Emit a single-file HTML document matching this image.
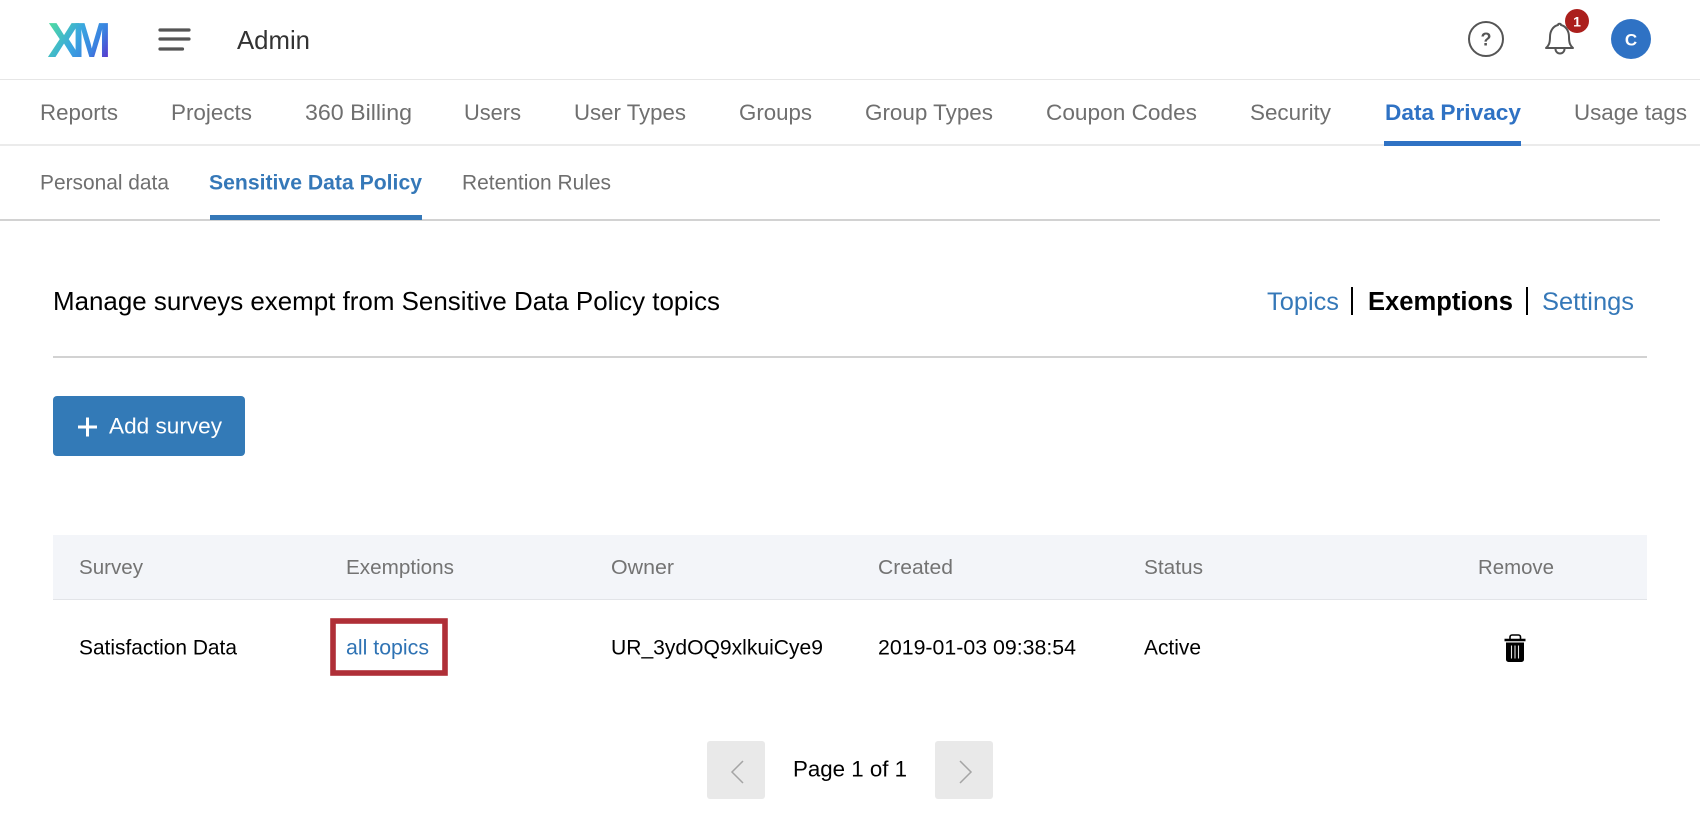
<!DOCTYPE html>
<html lang="en"><head><meta charset="utf-8"><title>Admin</title>
<style>
html,body{margin:0;padding:0;background:#fff;width:1700px;height:832px;overflow:hidden}
svg{display:block}
text{font-family:"Liberation Sans",sans-serif;white-space:pre}
.n{font-size:22.300px;fill:#6f6f6f}
.s{font-size:20.900px;fill:#6f6f6f}
.h{font-size:20.700px;fill:#737373}
.c{font-size:21.400px;fill:#000}
.l{font-size:25px;fill:#3578b8}
</style></head><body>
<svg width="1700" height="832" viewBox="0 0 1700 832" xmlns="http://www.w3.org/2000/svg">
<defs>
<linearGradient id="g" gradientUnits="userSpaceOnUse" x1="50" y1="22" x2="108" y2="58">
<stop offset="0" stop-color="#4fdca0"/><stop offset=".45" stop-color="#3aa6e0"/><stop offset=".75" stop-color="#3a80e0"/><stop offset="1" stop-color="#5a35cc"/>
</linearGradient>
</defs>
<rect width="1700" height="832" fill="#fff"/>

<!-- top bar -->
<text x="47.500" y="57" font-size="49" font-weight="700" fill="url(#g)" textLength="33" lengthAdjust="spacingAndGlyphs">X</text>
<text x="72.500" y="57" font-size="49" font-weight="700" fill="url(#g)" textLength="38.500" lengthAdjust="spacingAndGlyphs">M</text>
<g fill="none" stroke="#555" stroke-width="3.200" stroke-linecap="round">
<path d="M160 30H189M160 39H189M160 49H182.500"/>
</g>
<text x="237" y="49" font-size="25.800" fill="#333" textLength="73" lengthAdjust="spacingAndGlyphs">Admin</text>

<circle cx="1486" cy="39" r="17" fill="none" stroke="#555" stroke-width="2"/>
<text x="1486" y="45.500" font-size="18" font-weight="700" fill="#555" text-anchor="middle">?</text>
<path d="M1546 48c2.800-2.300 4-5 4-11 0-6.500 3.500-11 8-12 .2-1.600 2.800-1.600 3 0 4.500 1 8 5.500 8 12 0 6 1.200 8.700 4 11z" fill="#fff" stroke="#555" stroke-width="2" stroke-linejoin="round"/>
<path d="M1555.500 49a4.500 4.500 0 0 0 9 0" fill="none" stroke="#555" stroke-width="2"/>
<circle cx="1577" cy="21" r="12" fill="#ab1f1c"/>
<text x="1577" y="26.500" font-size="14" font-weight="700" fill="#fff" text-anchor="middle">1</text>
<circle cx="1631" cy="39" r="20" fill="#2f72c4"/>
<text x="1631" y="45.500" font-size="17" font-weight="700" fill="#fff" text-anchor="middle">C</text>

<rect x="0" y="79" width="1700" height="1" fill="#e6e6e6"/>

<!-- primary nav -->
<g class="nav">
<text class="n" x="40" y="120" textLength="78" lengthAdjust="spacingAndGlyphs">Reports</text>
<text class="n" x="171" y="120" textLength="81" lengthAdjust="spacingAndGlyphs">Projects</text>
<text class="n" x="305" y="120" textLength="107" lengthAdjust="spacingAndGlyphs">360 Billing</text>
<text class="n" x="464" y="120" textLength="57" lengthAdjust="spacingAndGlyphs">Users</text>
<text class="n" x="574" y="120" textLength="112" lengthAdjust="spacingAndGlyphs">User Types</text>
<text class="n" x="739" y="120" textLength="73" lengthAdjust="spacingAndGlyphs">Groups</text>
<text class="n" x="865" y="120" textLength="128" lengthAdjust="spacingAndGlyphs">Group Types</text>
<text class="n" x="1046" y="120" textLength="151" lengthAdjust="spacingAndGlyphs">Coupon Codes</text>
<text class="n" x="1250" y="120" textLength="81" lengthAdjust="spacingAndGlyphs">Security</text>
<text x="1385" y="120" font-size="22.600" font-weight="700" fill="#2f72c4" textLength="136" lengthAdjust="spacingAndGlyphs">Data Privacy</text>
<text class="n" x="1574" y="120" textLength="113" lengthAdjust="spacingAndGlyphs">Usage tags</text>
</g>
<rect x="0" y="144" width="1700" height="2" fill="#ebebeb"/>
<rect x="1384" y="141" width="137" height="5" fill="#2f72c4"/>

<!-- secondary nav -->
<text class="s" x="40" y="189.500" textLength="129" lengthAdjust="spacingAndGlyphs">Personal data</text>
<text x="209" y="189.500" font-size="21.200" font-weight="700" fill="#3578b8" textLength="213" lengthAdjust="spacingAndGlyphs">Sensitive Data Policy</text>
<text class="s" x="462" y="189.500" textLength="149" lengthAdjust="spacingAndGlyphs">Retention Rules</text>
<rect x="0" y="219" width="1660" height="2" fill="#d2d2d2"/>
<rect x="210" y="215" width="212" height="5" fill="#3578b8"/>

<!-- heading -->
<text x="53" y="310" font-size="25.800" fill="#000" textLength="667" lengthAdjust="spacingAndGlyphs">Manage surveys exempt from Sensitive Data Policy topics</text>
<text class="l" x="1267" y="310" textLength="72" lengthAdjust="spacingAndGlyphs">Topics</text>
<rect x="1351" y="287" width="2" height="28" fill="#000"/>
<text x="1368" y="310" font-size="25.500" font-weight="700" fill="#000" textLength="145" lengthAdjust="spacingAndGlyphs">Exemptions</text>
<rect x="1526" y="287" width="2" height="28" fill="#000"/>
<text class="l" x="1542" y="310" textLength="92" lengthAdjust="spacingAndGlyphs">Settings</text>
<rect x="53" y="356" width="1594" height="2" fill="#d2d2d2"/>

<!-- button -->
<rect x="53" y="396" width="192" height="60" rx="4" fill="#337ab7"/>
<path d="M87.500 417.500v19M78 427h19" stroke="#fff" stroke-width="3" fill="none"/>
<text x="109" y="433.500" font-size="22.600" fill="#fff" textLength="113" lengthAdjust="spacingAndGlyphs">Add survey</text>

<!-- table -->
<rect x="53" y="535" width="1594" height="64" fill="#f3f5f9"/>
<rect x="53" y="599" width="1594" height="1" fill="#e2e4e8"/>
<text class="h" x="79" y="574" textLength="64" lengthAdjust="spacingAndGlyphs">Survey</text>
<text class="h" x="346" y="574" textLength="108" lengthAdjust="spacingAndGlyphs">Exemptions</text>
<text class="h" x="611" y="574" textLength="63" lengthAdjust="spacingAndGlyphs">Owner</text>
<text class="h" x="878" y="574" textLength="75" lengthAdjust="spacingAndGlyphs">Created</text>
<text class="h" x="1144" y="574" textLength="59" lengthAdjust="spacingAndGlyphs">Status</text>
<text class="h" x="1478" y="574" textLength="76" lengthAdjust="spacingAndGlyphs">Remove</text>

<text class="c" x="79" y="654.500" textLength="158" lengthAdjust="spacingAndGlyphs">Satisfaction Data</text>
<rect x="333" y="621" width="112" height="52" fill="none" stroke="#af2f37" stroke-width="5.600"/>
<text x="346" y="654.500" font-size="21.400" fill="#2f73b4" textLength="83" lengthAdjust="spacingAndGlyphs">all topics</text>
<text class="c" x="611" y="654.500" textLength="212" lengthAdjust="spacingAndGlyphs">UR_3ydOQ9xlkuiCye9</text>
<text class="c" x="878" y="654.500" textLength="198" lengthAdjust="spacingAndGlyphs">2019-01-03 09:38:54</text>
<text class="c" x="1144" y="654.500" textLength="57" lengthAdjust="spacingAndGlyphs">Active</text>

<!-- trash -->
<path d="M1504.500 640h21" stroke="#000" stroke-width="2.400" fill="none"/>
<path d="M1510 639.500v-2.500a2 2 0 0 1 2-2h6.500a2 2 0 0 1 2 2v2.500" stroke="#000" stroke-width="1.600" fill="none"/>
<path d="M1506 642.500h18v17a2.500 2.500 0 0 1-2.500 2.500h-13a2.500 2.500 0 0 1-2.500-2.500z" fill="#000"/>
<path d="M1511.500 645.500v13M1515 645.500v13M1518.500 645.500v13" stroke="#e4e4e4" stroke-width="1.100" fill="none"/>

<!-- pagination -->
<rect x="707" y="741" width="58" height="58" rx="3" fill="#e9e9e9"/>
<path d="M743 761l-11 11 11 11" fill="none" stroke="#a5a5a5" stroke-width="1.500"/>
<text x="793" y="776.500" font-size="22.300" fill="#000" textLength="114" lengthAdjust="spacingAndGlyphs">Page 1 of 1</text>
<rect x="935" y="741" width="58" height="58" rx="3" fill="#e9e9e9"/>
<path d="M960 761l11 11-11 11" fill="none" stroke="#a5a5a5" stroke-width="1.500"/>
</svg>
</body></html>
